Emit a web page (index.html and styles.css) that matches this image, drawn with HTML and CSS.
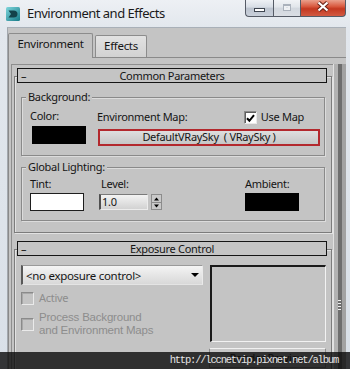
FILE: index.html
```html
<!DOCTYPE html>
<html>
<head>
<meta charset="utf-8">
<link rel="stylesheet" href="styles.css">
</head>
<body>
<div class="win">
  <div class="titlebar">
    <svg class="appicon" width="14" height="14" viewBox="0 0 14 14">
      <defs><linearGradient id="ig" x1="0" y1="0" x2="1" y2="1"><stop offset="0" stop-color="#7fd6dc"/><stop offset="1" stop-color="#157a87"/></linearGradient></defs>
      <rect x="0" y="0" width="14" height="14" rx="1.5" fill="url(#ig)"/>
      <path d="M2.5 3.5 H7.5 Q11.5 3.5 11.5 7 Q11.5 10.5 7.5 10.5 H2.5 L5 7 Z" fill="#14424a"/>
    </svg>
    <span class="title">Environment and Effects</span>
    <div class="caption">
      <div class="cbtn cmin"><span class="minglyph"></span></div>
      <div class="cbtn cmax"><span class="maxglyph"></span></div>
      <div class="cbtn cclose">
        <svg width="14" height="11" viewBox="0 0 14 11"><path d="M2.5 1.5 L11.5 9.5 M11.5 1.5 L2.5 9.5" stroke="#6b2418" stroke-width="4.2"/><path d="M2.5 1.5 L11.5 9.5 M11.5 1.5 L2.5 9.5" stroke="#fff" stroke-width="2.2"/></svg>
      </div>
    </div>
  </div>
  <div class="client">
    <div class="tabs">
      <div class="tab active">Environment</div>
      <div class="tab">Effects</div>
    </div>
    <div class="tabpanel">
      <div class="scrollwrap">
        <div class="rollout r1">
          <div class="rhead"><span class="minus">–</span><span class="rtitle">Common Parameters</span><span></span></div>
          <div class="group g1">
            <div class="gtitle">Background:</div>
            <div class="bgrow">
              <div class="colorcol">
                <div class="lbl">Color:</div>
                <div class="swatch sw-black sw-color"></div>
              </div>
              <div class="mapcol">
                <div class="maprow">
                  <span class="lbl">Environment Map:</span>
                  <span class="chk"><span class="box checked"><svg width="9" height="9" viewBox="0 0 9 9"><path d="M1 4.2 L3.4 6.8 L8 1.2" stroke="#000" stroke-width="2" fill="none"/></svg></span>Use Map</span>
                </div>
                <div class="mapbtn">DefaultVRaySky&nbsp; ( VRaySky )</div>
              </div>
            </div>
          </div>
          <div class="group g2">
            <div class="gtitle">Global Lighting:</div>
            <div class="glrow">
              <div class="tintcol">
                <div class="lbl">Tint:</div>
                <div class="swatch sw-white"></div>
              </div>
              <div class="levelcol">
                <div class="lbl lvl">Level:</div>
                <div class="spinner">
                  <div class="spinput">1.0</div>
                  <div class="sparrows">
                    <svg width="9" height="14" viewBox="0 0 9 14"><path d="M2 5.5 H7 L4.5 2.5 Z" fill="#000"/><path d="M0 7.5 H9" stroke="#8a8a8a" stroke-width="1"/><path d="M2 9.5 H7 L4.5 12.5 Z" fill="#000"/></svg>
                  </div>
                </div>
              </div>
              <div class="ambcol">
                <div class="lbl">Ambient:</div>
                <div class="swatch sw-black"></div>
              </div>
            </div>
          </div>
        </div>
        <div class="rollout r2">
          <div class="rhead"><span class="minus">–</span><span class="rtitle">Exposure Control</span><span></span></div>
          <div class="exprow">
            <div class="expleft">
              <div class="dropdown"><span class="ddtext">&lt;no exposure control&gt;</span><span class="ddarrow"></span></div>
              <div class="chkrow dis"><span class="box"></span><span>Active</span></div>
              <div class="chkrow dis two"><span class="box"></span><span class="twolines"><span class="ln">Process Background</span><span class="ln">and Environment Maps</span></span></div>
            </div>
            <div class="expright">
              <div class="preview"></div>
              <div class="rpbtn">Render Preview</div>
            </div>
          </div>
        </div>
      </div>
      <div class="vscroll"><div class="grip"></div></div>
    </div>
  </div>
  <div class="watermark">http://lccnetvip.pixnet.net/album</div>
</div>
</body>
</html>
```
FILE: styles.css
```css
* { box-sizing: border-box; margin: 0; padding: 0; }
html, body { width: 350px; height: 369px; overflow: hidden; }
body {
  font-family: "Noto Sans", "Liberation Sans", sans-serif;
  font-size: 11px;
  letter-spacing: -0.3px;
  color: #151515;
  background: #dfe5ec;
}
.win {
  position: relative;
  width: 350px;
  height: 369px;
  display: flex;
  flex-direction: column;
  background: linear-gradient(to bottom, #edf0f4 0, #e2e7ed 28px, #d9e0e8 100%);
  overflow: hidden;
}
.titlebar {
  height: 27px;
  flex: none;
  display: flex;
  align-items: flex-start;
}
.appicon { margin: 7px 0 0 6px; flex: none; }
.title {
  margin: 4px 0 0 7px;
  font-size: 13px;
  line-height: 18px;
  letter-spacing: -0.5px;
  color: #1a1a1a;
}
.caption {
  margin-left: auto;
  margin-right: 4px;
  display: flex;
  height: 17px;
}
.cbtn {
  height: 17px;
  border: 1px solid #555b66;
  border-top: none;
  display: flex;
  align-items: center;
  justify-content: center;
}
.cmin {
  width: 28px;
  border-radius: 0 0 0 4px;
  border-right: none;
  background: linear-gradient(to bottom, #eef1f5 0, #d7dde5 45%, #bcc4cf 50%, #c9d0da 100%);
}
.cmax {
  width: 27px;
  border-right: none;
  background: linear-gradient(to bottom, #f1f3f6 0, #e1e5ea 45%, #d2d7de 50%, #dadee4 100%);
}
.cclose {
  width: 46px;
  border-radius: 0 0 4px 0;
  background: linear-gradient(to bottom, #eaa08c 0, #d95a40 40%, #c43820 55%, #d25a42 100%);
}
.minglyph {
  width: 11px;
  height: 4px;
  margin-top: 4px;
  background: #fff;
  border: 1px solid #3e4550;
}
.maxglyph {
  width: 8px;
  height: 7px;
  margin-top: -2px;
  border: 1px solid #aab1bb;
  box-shadow: inset 0 1px 0 #aab1bb, inset 0 0 0 2px #eef0f3;
}
.cclose svg { margin-top: -3px; }

.client {
  flex: 1;
  margin: 0 4px 0 7px;
  background: #c4c4c4;
  border-top: 1px solid #a9b0b8;
  border-left: 1px solid #a3a8ae;
  display: flex;
  flex-direction: column;
  min-height: 0;
}
.tabs {
  display: flex;
  align-items: flex-end;
  padding-top: 5px;
  height: 29px;
  flex: none;
  position: relative;
  z-index: 1;
}
.tab {
  height: 22px;
  width: 52px;
  margin-left: 2px;
  border: 1px solid #8c8c8c;
  border-bottom: none;
  border-radius: 2px 2px 0 0;
  background: linear-gradient(to bottom, #e2e2e2, #d2d2d2);
  text-align: center;
  line-height: 19px;
  font-size: 11.5px;
}
.tab.active {
  width: 85px;
  height: 25px;
  margin-left: 0;
  margin-bottom: -1px;
  background: #c4c4c4;
  line-height: 19px;
}
.tabpanel {
  flex: 1;
  display: flex;
  border-top: 1px solid #8a8a8a;
  border-left: 1px solid #8a8a8a;
  padding: 6px 0 0 2px;
  min-height: 0;
}
.scrollwrap {
  flex: 1;
  border-top: 1px solid #8e8e8e;
  border-left: 1px solid #8e8e8e;
  padding-left: 2px;
  min-width: 0;
}
.vscroll {
  width: 13px;
  flex: none;
  background: linear-gradient(to right, #e2e2e2 0 1px, #b2b2b2 1px 5px, #6e6e6e 5px 9px, #a2a2a2 9px 13px);
}
.grip {
  width: 3px;
  height: 10px;
  margin: 236px 0 0 5px;
  background: repeating-linear-gradient(to bottom, #f0f0f0 0 1px, transparent 1px 3px);
}

.rollout {
  border: 1px solid #7c7c7c;
  box-shadow: 1px 1px 0 #e2e2e2, inset 1px 1px 0 #e2e2e2;
  margin: 11px 1px 0 0;
}
.r1 { padding-bottom: 11px; }
.r2 { margin-top: 16px; padding-bottom: 40px; }
.rhead {
  height: 15px;
  margin: -9px 4px 0 2px;
  border: 1px solid #141414;
  background: #c4c4c4;
  display: grid;
  grid-template-columns: 1fr auto 1fr;
  align-items: center;
  line-height: 13px;
}
.minus { padding-left: 3px; font-size: 11px; }
.rtitle { font-size: 11px; }

.group {
  margin: 14px 6px 0 6px;
  border: 1px solid #8a8a8a;
  box-shadow: inset 1px 1px 0 #dcdcdc, 1px 1px 0 #dcdcdc;
}
.g2 { margin-top: 11px; }
.gtitle {
  margin: -8px 0 0 4px;
  padding: 0 2px;
  width: fit-content;
  background: #c4c4c4;
  line-height: 14px;
}
.lbl { line-height: 14px; }
.bgrow {
  display: flex;
  padding: 5px 4px 9px 8px;
}
.colorcol { width: 67px; flex: none; }
.swatch {
  width: 54px;
  height: 18px;
  margin-top: 2px;
}
.sw-color { margin: 3px 0 0 2px; }
.sw-black { background: #000; }
.sw-white { background: #fff; border: 1px solid #1e1e1e; }
.mapcol { width: 223px; flex: none; }
.maprow { display: flex; align-items: center; }
.chk {
  margin-left: auto;
  margin-right: 16px;
  display: flex;
  align-items: center;
  line-height: 14px;
}
.box {
  width: 13px;
  height: 13px;
  flex: none;
  margin-right: 4px;
  border-top: 1px solid #8a8a8a;
  border-left: 1px solid #8a8a8a;
  border-right: 1px solid #eaeaea;
  border-bottom: 1px solid #eaeaea;
  box-shadow: inset 1px 1px 0 #5e5e5e;
  display: flex;
  align-items: center;
  justify-content: center;
}
.box.checked { background: #fff; margin-top: 2px; }
.box.checked svg { margin: 1px 0 0 1px; }
.mapbtn {
  margin: 5px 0 0 1px;
  height: 17px;
  border: 2px solid #b3282d;
  background: linear-gradient(to bottom, #dedede, #c6c6c6);
  text-align: center;
  line-height: 12px;
  font-size: 11px;
}

.glrow {
  display: flex;
  padding: 3px 4px 9px 8px;
}
.tintcol { width: 69px; flex: none; }
.levelcol { width: 146px; flex: none; }
.lvl { padding-left: 2px; }
.spinner {
  display: flex;
  align-items: center;
  margin-top: 3px;
}
.spinput {
  width: 49px;
  height: 16px;
  border-top: 1px solid #7a7a7a;
  border-left: 2px solid #505050;
  border-right: 1px solid #ececec;
  border-bottom: 1px solid #ececec;
  background: linear-gradient(to bottom, #f3f3f3, #d2d2d2);
  padding-left: 1px;
  line-height: 14px;
}
.sparrows {
  width: 11px;
  height: 16px;
  margin-left: 3px;
  border: 1px solid #8c8c8c;
  background: #c9c9c9;
  display: flex;
  justify-content: center;
}
.ambcol { flex: none; }

.exprow {
  display: flex;
  padding: 9px 5px 0 6px;
}
.expleft { width: 182px; flex: none; }
.expright { margin-left: 7px; width: 116px; flex: none; }
.dropdown {
  height: 20px;
  border-top: 1px solid #9a9a9a;
  border-left: 2px solid #585858;
  border-right: 1px solid #eaeaea;
  border-bottom: 1px solid #e4e4e4;
  background: linear-gradient(to bottom, #f4f4f4, #d8d8d8);
  display: flex;
  align-items: center;
  padding-left: 3px;
  font-size: 11.5px;
}
.ddarrow {
  margin-left: auto;
  margin-right: 3px;
  width: 0;
  height: 0;
  border-left: 4px solid transparent;
  border-right: 4px solid transparent;
  border-top: 4px solid #000;
}
.chkrow {
  display: flex;
  align-items: center;
  margin-top: 6px;
  line-height: 14px;
}
.chkrow .box { margin-right: 5px; box-shadow: inset 1px 1px 0 #a8a8a8; }
.twolines { display: flex; flex-direction: column; }
.ln { display: block; height: 13px; line-height: 13px; font-family: "Liberation Sans", "Noto Sans", sans-serif; font-size: 11.5px; letter-spacing: -0.2px; }
.dis { color: #8d8d8d; }
.preview {
  height: 77px;
  border-top: 2px solid #1a1a1a;
  border-left: 2px solid #1a1a1a;
  border-right: 1px solid #f2f2f2;
  border-bottom: 1px solid #f2f2f2;
}
.rpbtn {
  margin: 6px 0 0 -1px;
  height: 20px;
  border: 1px solid #8c8c8c;
  border-top-color: #f0f0f0;
  background: #c8c8c8;
  text-align: center;
  line-height: 18px;
}
.watermark {
  position: absolute;
  left: 0;
  right: 0;
  bottom: 0;
  height: 17px;
  background: rgba(10, 10, 10, 0.8);
  color: #e4e4e4;
  font-family: "Liberation Mono", "DejaVu Sans Mono", monospace;
  font-size: 10.5px;
  letter-spacing: -1.2px;
  line-height: 17px;
  text-align: right;
  padding-right: 12px;
}
```
